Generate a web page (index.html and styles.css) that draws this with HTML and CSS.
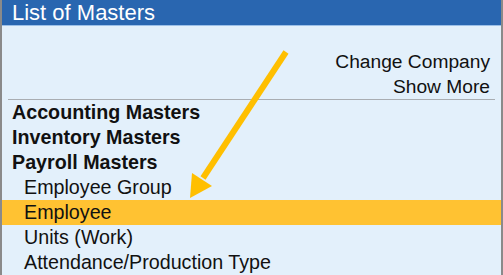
FILE: index.html
```html
<!DOCTYPE html>
<html lang="en">

<head>
    <meta charset="UTF-8">
    <meta name="viewport" content="width=device-width, initial-scale=1.0">
    <title>List of Masters</title>
    <link rel="stylesheet" href="styles.css">
</head>

<body>
    <div class="panel">
        <div class="panel-title">List of Masters</div>
        <div class="panel-body">
            <div class="links">
                <p>Change Company</p>
                <p>Show More</p>
            </div>
            <ul class="masters">
                <li class="group">Accounting Masters</li>
                <li class="group">Inventory Masters</li>
                <li class="group">Payroll Masters</li>
                <li class="item">Employee Group</li>
                <li class="item selected">Employee</li>
                <li class="item">Units (Work)</li>
                <li class="item">Attendance/Production Type</li>
            </ul>
        </div>

        <!-- pointer arrow drawn over the list -->
        <svg class="pointer" width="503" height="275" viewBox="0 0 503 275">
            <line x1="286" y1="52" x2="203" y2="178" stroke="#ffbf00" stroke-width="6" />
            <polygon points="190,198 192,173 212,186" fill="#ffbf00" />
        </svg>
    </div>
</body>

</html>
```

FILE: styles.css
```css
* {
    margin: 0;
    padding: 0;
    box-sizing: border-box;
}

body {
    font-family: "Liberation Sans", Arial, sans-serif;
    background-color: #e3f0fb;
    width: 503px;
    height: 275px;
    overflow: hidden;
}

.panel {
    position: relative;
    height: 275px;
    border-left: 2px solid #8a8a8a;
    border-right: 2px solid #8a8a8a;
    background-color: #e3f0fb;
}

.panel-title {
    height: 26px;
    line-height: 25px;
    padding-left: 10px;
    background-color: #2966b0;
    border-bottom: 1px solid #9cc0e8;
    color: #fff;
    font-size: 22px;
}

.links {
    padding: 23px 11px 0 0;
    text-align: right;
    font-size: 19.2px;
    line-height: 25px;
    color: #111;
}

.masters {
    list-style: none;
    margin: 0 6px;
    border-top: 1px solid #a9adb2;
}

.masters li {
    height: 25px;
    line-height: 25px;
    font-size: 19.7px;
    color: #111;
}

.group {
    font-weight: bold;
    padding-left: 4px;
}

.item {
    padding-left: 16px;
}

.selected {
    background-color: #ffc232;
    margin: 0 -6px;
    padding-left: 22px;
}

.pointer {
    position: absolute;
    top: 0;
    left: -2px;
    pointer-events: none;
}
```
